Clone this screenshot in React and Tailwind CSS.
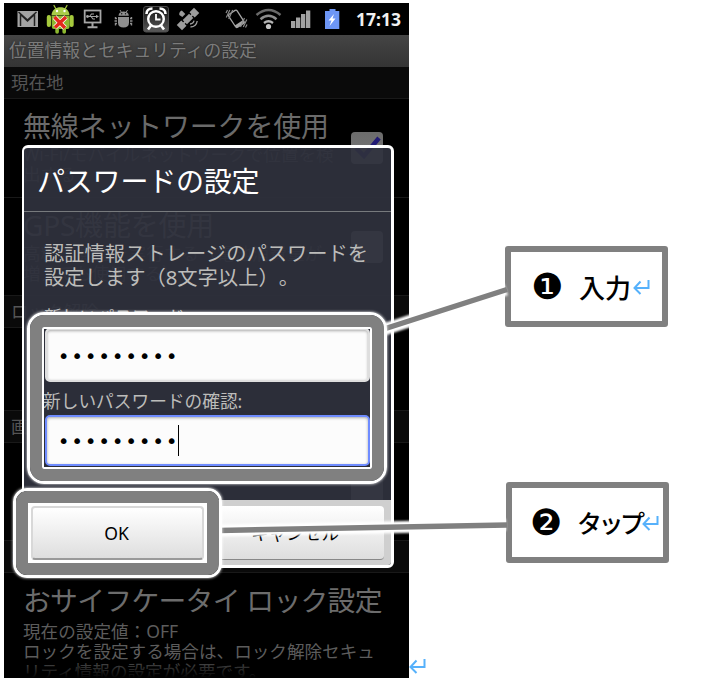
const JP = "font-['Noto_Sans','Noto_Sans_CJK_JP',sans-serif]";

function Glyph({ x, w, children }) {
  return (
    <svg className="block shrink-0" width={w} height="32" viewBox={`${x} 3 ${w} 32`} fill="none">
      {children}
    </svg>
  );
}

function StatusBar() {
  return (
    <div className="flex h-8 shrink-0 items-center bg-black pl-1.5">
      <Glyph x={10} w={32}>
        <rect x="17.5" y="11" width="20.5" height="16" fill="#a3a3a3" />
        <path d="M20.5 26V14.5l7 6.5 7-6.5V26M18.5 12l9 8 9-8" stroke="#222" strokeWidth="1.5" />
      </Glyph>
      <Glyph x={42} w={36}>
        <path d="M54 5.500l2 3.500M67 5.500l-2 3.500" stroke="#a5c93c" strokeWidth="1.300" strokeLinecap="round" />
        <path d="M51.500 15c.5-10.500 17.500-10.500 18 0z" fill="#a9cc48" />
        <circle cx="57" cy="11" r="1.200" fill="#fff" />
        <circle cx="64.500" cy="11" r="1.200" fill="#fff" />
        <rect x="46.800" y="15" width="4.200" height="12" rx="2" fill="#a5c93c" />
        <rect x="69.500" y="15" width="4.200" height="12" rx="2" fill="#a5c93c" />
        <path d="M51.500 15.500h18v11.500q0 2-2 2h-1.500v3q0 1.800-1.800 1.800t-1.800-1.800v-3h-3.500v3q0 1.800-1.800 1.800t-1.800-1.800v-3h-1.500q-2 0-2-2z" fill="#8db82f" />
        <path d="M54.500 17l10.500 11M66 17l-11 10.500" stroke="#fff" strokeWidth="5" />
        <path d="M54.500 17l10.500 11M66 17l-11 10.500" stroke="#e3291c" strokeWidth="3.500" />
      </Glyph>
      <Glyph x={78} w={30}>
        <rect x="84.700" y="10.500" width="15.800" height="12" stroke="#a6a6a6" strokeWidth="1.800" />
        <path d="M92.500 22.500v4M87.500 27.300h10" stroke="#a6a6a6" strokeWidth="2" />
        <path d="M87 16.500h10M89.500 16.500l2-2.500h2.500M91 16.500l2 2.500h2" stroke="#a6a6a6" strokeWidth="1.100" />
        <circle cx="87.500" cy="16.500" r="1.400" fill="#a6a6a6" />
        <path d="M96 14.700l3 1.800-3 1.800z" fill="#a6a6a6" />
      </Glyph>
      <Glyph x={108} w={30}>
        <path d="M118.500 15.700c.3-5.600 10-5.600 10.300 0z" fill="#8f8f8f" />
        <path d="M120 10l1.500 2.500M127.500 10l-1.500 2.500" stroke="#8f8f8f" />
        <path d="M118 17h11v5.500q0 5-5.500 5t-5.500-5z" fill="#8f8f8f" />
        <path d="M117 18.500h-1.500v-1.500M117 21h-2.500M117 23.500h-1.500v2M130 18.500h1.500v-1.500M130 21h2.500M130 23.500h1.500v2" stroke="#8f8f8f" strokeWidth="1.400" />
        <circle cx="121.700" cy="13.700" r=".7" fill="#111" />
        <circle cx="125.500" cy="13.700" r=".7" fill="#111" />
      </Glyph>
      <Glyph x={138} w={36}>
        <defs>
          <linearGradient id="tile" x1="0" y1="0" x2="0" y2="1">
            <stop offset="0" stopColor="#101010" />
            <stop offset="1" stopColor="#5a5a5a" />
          </linearGradient>
        </defs>
        <rect x="143.500" y="6.500" width="25" height="25.500" rx="2.500" fill="url(#tile)" stroke="#4c4c4c" />
        <circle cx="156" cy="19" r="7.800" stroke="#fff" strokeWidth="2.400" />
        <path d="M156 14v5.500h4.500" stroke="#fff" strokeWidth="1.800" />
        <path d="M151 25.500l-3 4M161 25.500l3 4" stroke="#fff" strokeWidth="2.600" />
        <path d="M146.500 14q0-5.500 6-5.500M165.500 14q0-5.500-6-5.500" stroke="#fff" strokeWidth="2.600" />
      </Glyph>
      <Glyph x={174} w={30}>
        <g transform="rotate(45 188 19)" fill="#9c9c9c">
          <rect x="185" y="14.500" width="6" height="9" />
          <rect x="184.300" y="6.800" width="7.400" height="6.400" />
          <rect x="184.300" y="24.800" width="7.400" height="6.400" />
          <path d="M187 12h2v14h-2z" />
        </g>
        <path d="M179.300 15q-.5-3.500 2.500-4.500l3.500 3.500-3 3z" fill="#9c9c9c" />
        <path d="M190 24q3.300 0 4-3.300M190.500 27q6-.5 6.700-6" stroke="#9c9c9c" strokeWidth="1.300" />
      </Glyph>
      <div className="w-[18px] shrink-0" />
      <Glyph x={222} w={30}>
        <g transform="rotate(-33 236.500 19)">
          <rect x="231.500" y="11" width="10" height="15.500" rx="1.500" stroke="#a5a5a5" strokeWidth="1.300" />
          <path d="M231.500 23.500h10v3h-10z" fill="#a5a5a5" />
        </g>
        <path d="M226.300 17.500l3.500-7.500M228.700 19l4-9M226 13l1.500-3M240.500 27l4-9M243.300 27l3.500-7.500M245.500 27.500l1.500-3" stroke="#8b8b8b" strokeWidth="1.200" />
      </Glyph>
      <Glyph x={252} w={34}>
        <path d="M256.500 15q12-10 24 0" stroke="#696969" strokeWidth="2.500" />
        <path d="M260.500 19.200q8-6.800 16 0" stroke="#8d8d8d" strokeWidth="2.500" />
        <path d="M264 23q4.500-3.500 9 0" stroke="#b5b5b5" strokeWidth="2.300" />
        <circle cx="268.500" cy="26.500" r="2.600" fill="#c5c5c5" />
      </Glyph>
      <Glyph x={286} w={30}>
        <path d="M291 21h4.300v7H291zM296 17.500h4.300V28H296zM301 14h4.300v14H301zM306 10.500h4.300V28H306z" fill="#a2a2a2" />
      </Glyph>
      <Glyph x={316} w={36}>
        <path d="M329.500 9h6v2h3.800v18h-14.300V11h4.500z" fill="#6d96f5" />
        <path d="M334 14l-5.500 6.500h3l-2 5.500 6-7.500h-3z" fill="#fff" />
      </Glyph>
      <span className="ml-1 text-[17.5px] leading-8 font-bold text-[#f0f0f0] font-['Noto_Sans',sans-serif]">17:13</span>
    </div>
  );
}

function Section({ children }) {
  return (
    <div className="h-8 shrink-0 overflow-hidden border-b border-[#191919] bg-[#0a0a0a] pl-[7px] text-[17.5px] leading-[30px] text-[#555]">
      {children}
    </div>
  );
}

function Row({ title, lines, checkbox, checked, className }) {
  return (
    <div className={`flex shrink-0 overflow-hidden border-b border-[#191919] bg-black pl-[19px] whitespace-nowrap ${className}`}>
      <div className="w-[328px] pt-[9px]">
        <div className="h-9 text-[28px] leading-9 tracking-[-0.2px] text-[#6a6a6a]">{title}</div>
        {lines.map((l) => (
          <div key={l} className="h-5 text-[17.6px] leading-5 text-[#4c4c4c]">{l}</div>
        ))}
      </div>
      {checkbox && (
        <div className="mt-[33px] size-8 rounded-sm bg-gradient-to-b from-[#6c6c6c] to-[#777]">
          {checked && (
            <svg width="32" height="32" viewBox="0 0 32 32" fill="none">
              <path d="M5 16l8 8L28 6" stroke="#211a75" strokeWidth="4.500" />
            </svg>
          )}
        </div>
      )}
    </div>
  );
}

function Dots() {
  return (
    <div className="flex pl-[10px]">
      {Array.from({ length: 9 }, (_, i) => (
        <span key={i} className="w-[13.5px] text-center text-[20px] leading-8 text-black font-['DejaVu_Sans',sans-serif]">•</span>
      ))}
    </div>
  );
}

function Dialog() {
  return (
    <div className="absolute top-[142px] left-[18px] flex h-[423px] w-[372px] flex-col overflow-hidden rounded-[6px] border-[3px] border-l-2 border-white bg-[#2f323d]/93 whitespace-nowrap">
      <div className="h-[64px] shrink-0 border-b border-[#777a7d] pl-[13px] text-[28px] leading-[66px] tracking-[-0.2px] text-white">パスワードの設定</div>
      <div className="flex h-[288px] shrink-0 flex-col pl-5 text-[#bcbcba]">
        <p className="mt-[29px] text-[20.3px] leading-6 [text-spacing-trim:space-all]">認証情報ストレージのパスワードを<br />設定します（8文字以上）。</p>
        <div className="mt-[14px] h-[25px] text-[17.6px] leading-[26px]">新しいパスワード:</div>
        <div className="ml-px flex h-[54px] w-[325px] items-center rounded-[5px] border-2 border-[#dedede] bg-[#fcfcfc] pt-px shadow-[inset_0_1px_3px_#aaa]"><Dots /></div>
        <div className="ml-[-1px] h-[33px] text-[17.7px] leading-[39px]">新しいパスワードの確認:</div>
        <div className="ml-px flex h-[51px] w-[325px] items-center rounded-[5px] border-[2.5px] border-[#6f8cff] bg-[#fcfcfc] shadow-[inset_0_1px_3px_#aaa]">
          <Dots />
          <div className="ml-[-1px] h-[31px] w-px bg-black" />
        </div>
      </div>
      <div className="flex flex-1 bg-[#cfcfcf] pt-[6px]">
        <div className="w-[182px] shrink-0" />
        <div className="h-[54px] w-[178px] rounded-[4px] border-b border-[#888] bg-gradient-to-b from-white to-[#dedede] text-center text-[17.6px] leading-[54px] text-black">キャンセル</div>
      </div>
    </div>
  );
}

function Connectors() {
  return (
    <svg className="absolute top-0 left-0" width="710" height="690" viewBox="0 0 710 690">
      <defs>
        <filter id="soft" x="-20%" y="-100%" width="140%" height="300%"><feGaussianBlur stdDeviation="1" /></filter>
      </defs>
      <g stroke="#fff" strokeWidth="12" filter="url(#soft)">
        <path d="M384 329.500L506 289.500M221 530.500L506 525" />
      </g>
      <g stroke="#808080" strokeWidth="5.500">
        <path d="M384 329L507 289.500M219 530.500L507 525" />
      </g>
    </svg>
  );
}

function Return() {
  return (
    <svg className="block shrink-0" width="17" height="16" viewBox="0 0 17 16" fill="none" stroke="#56b1fb" strokeWidth="2">
      <path d="M15.500 1v8H1.500M7.500 2.500L1.500 9l6 6" />
    </svg>
  );
}

function Callout({ mark, label, className }) {
  return (
    <div className={`flex h-[81px] w-[163px] shrink-0 items-center rounded-[3px] border-[6px] border-[#808080] bg-white text-black font-['Noto_Sans_CJK_JP',sans-serif] ${className}`}>
      <span className="w-[48px] text-[36px] leading-none font-['DejaVu_Sans',sans-serif]">{mark}</span>
      {label}
      <Return />
    </div>
  );
}

export default function App() {
  return (
    <div className={`relative flex h-[690px] w-[710px] overflow-hidden bg-white ${JP}`}>
      <div className="relative mt-[3px] ml-1 flex h-[675px] w-[405px] shrink-0 flex-col overflow-hidden bg-black">
        <StatusBar />
        <div className="h-8 shrink-0 bg-gradient-to-b from-[#454545] to-[#343434] pl-[5px] text-[17.8px] leading-[31px] text-[#7b7b7b] [text-shadow:0_0_2px_#222]">位置情報とセキュリティの設定</div>
        <Section>現在地</Section>
        <Row className="h-[99px]" title="無線ネットワークを使用" lines={["Wi-Fi/モバイルネットワークで位置を検", "出する"]} checkbox checked />
        <Row className="h-[98px]" title="GPS機能を使用" lines={["高精度測位を実行する（電池消費量が", "増えても使用する）"]} checkbox />
        <Section>ロック解除</Section>
        <Row className="h-[83px]" title="" lines={[]} />
        <Section>画面</Section>
        <Row className="h-[98px]" title="" lines={["", "パターンを解除"]} checkbox />
        <Section>お</Section>
        <div className="relative pt-[9px] pl-[19px] whitespace-nowrap">
          <div className="h-9 text-[27.8px] leading-9 tracking-[-0.7px] text-[#6c6c6c]">おサイフケータイ ロック設定</div>
          <div className="pt-[3px] text-[17.6px] leading-5 text-[#5c5c5c]">現在の設定値：OFF<br />ロックを設定する場合は、ロック解除セキュ<br />リティ情報の設定が必要です。</div>
        </div>
        <div className="absolute bottom-0 left-0 h-5 w-full bg-gradient-to-b from-transparent to-black" />
        <Dialog />
      </div>

      <div className="flex w-4 shrink-0 flex-col pt-[658px]"><Return /></div>

      <div className="ml-[80px] flex flex-col pt-[246px]">
        <Callout className="pl-5" mark="❶" label={<span className="mr-[2px] text-[26px] leading-none font-medium">入力</span>} />
        <Callout className="mt-[155px] ml-px pl-[18px]" mark="❷" label={<span className="-ml-px text-[25px] leading-none font-medium tracking-[-3.5px]">タップ</span>} />
      </div>

      <Connectors />

      <div className="absolute top-[312px] left-[27px] h-[172px] w-[360px] rounded-[17px] border-[3px] border-white shadow-[0_0_3px_#fff]">
        <div className="h-full w-full rounded-[14px] border-[12px] border-[#808080]">
          <div className="h-full w-full rounded-[2px] border-2 border-white" />
        </div>
      </div>
      <div className="absolute top-[488px] left-[13px] h-[90px] w-[209px] rounded-[14px] border-[3px] border-white shadow-[0_0_3px_#fff]">
        <div className="h-full w-full rounded-[11px] border-[12px] border-[#808080] bg-white p-[3px]">
          <div className="h-[54px] w-[173px] rounded-[4px] border-2 border-[#d8d8d8] border-b-[#999] bg-gradient-to-b from-white to-[#dedede] pr-0.5 text-center text-[17.6px] leading-[51px] text-black font-['Noto_Sans',sans-serif]">OK</div>
        </div>
      </div>
    </div>
  );
}
